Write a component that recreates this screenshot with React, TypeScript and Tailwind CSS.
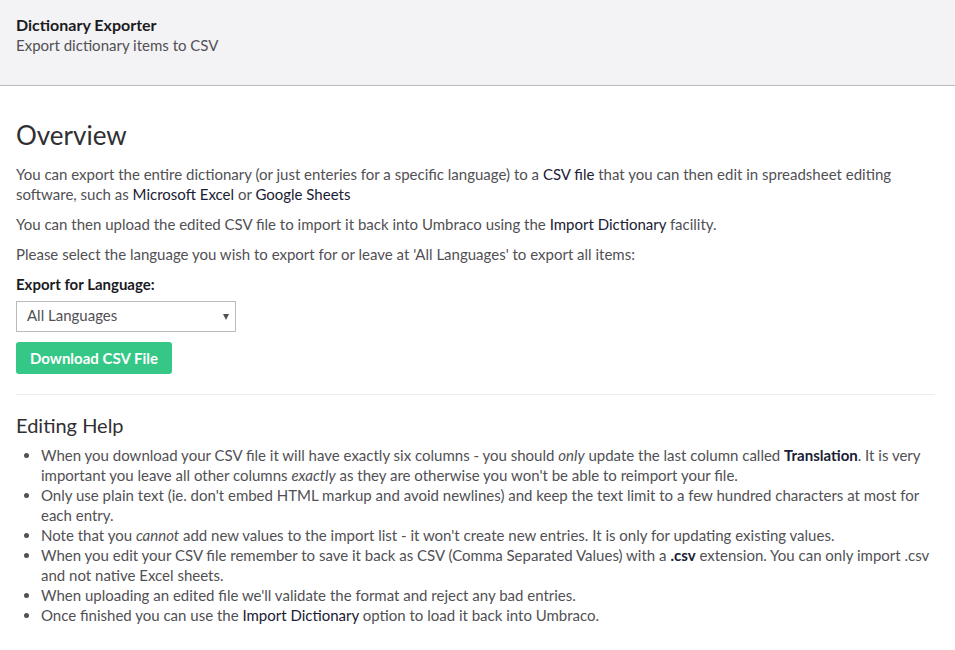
function Link({ children }: { children: React.ReactNode }) {
  return <span className="text-[#1a2033]">{children}</span>;
}

const help: React.ReactNode[] = [
  <>
    When you download your CSV file it will have exactly six columns - you should <em>only</em> update the last
    column called <strong className="text-[#1a2033]">Translation</strong>. It is very important you leave all other
    columns <em>exactly</em> as they are otherwise you won't be able to reimport your file.
  </>,
  <>
    Only use plain text (ie. don't embed HTML markup and avoid newlines) and keep the text limit to a few hundred
    characters at most for each entry.
  </>,
  <>
    Note that you <em>cannot</em> add new values to the import list - it won't create new entries. It is only for
    updating existing values.
  </>,
  <>
    When you edit your CSV file remember to save it back as CSV (Comma Separated Values) with a{" "}
    <strong className="text-[#1a2033]">.csv</strong> extension. You can only import .csv and not native Excel sheets.
  </>,
  <>When uploading an edited file we'll validate the format and reject any bad entries.</>,
  <>
    Once finished you can use the <Link>Import Dictionary</Link> option to load it back into Umbraco.
  </>,
];

function App() {
  return (
    <div className="min-h-screen bg-white font-['Lato','Open_Sans',sans-serif] text-[15px] leading-5 text-[#515054]">
      <header className="h-[86px] border-b border-[#bbbabf] bg-[#f3f3f5] px-4 pt-[15px]">
        <h2 className="text-[16px] font-bold text-[#1b1b1f]">Dictionary Exporter</h2>
        <p>Export dictionary items to CSV</p>
      </header>

      <main className="px-4 pt-[34px]">
        <h1 className="mb-[13px] text-[26px] leading-[31px] text-[#303033]">Overview</h1>
        <p className="mb-[10px]">
          You can export the entire dictionary (or just enteries for a specific language) to a <Link>CSV file</Link>{" "}
          that you can then edit in spreadsheet editing software, such as <Link>Microsoft Excel</Link> or{" "}
          <Link>Google Sheets</Link>
        </p>
        <p className="mb-[10px]">
          You can then upload the edited CSV file to import it back into Umbraco using the{" "}
          <Link>Import Dictionary</Link> facility.
        </p>
        <p className="mb-[10px]">
          Please select the language you wish to export for or leave at 'All Languages' to export all items:
        </p>

        <label className="mb-[7px] block font-bold text-[#1b1b1f]">Export for Language:</label>
        <div className="flex h-[31px] w-[220px] items-center justify-between border border-[#bbbbbb] pb-[3px] pl-[10px] pr-[6px]">
          <span>All Languages</span>
          <svg width="6" height="6" viewBox="0 0 6 6" className="mt-[3px]">
            <path d="M0 0h6L3 6z" fill="#515054" />
          </svg>
        </div>

        <button className="mt-[10px] flex h-8 w-[156px] items-center justify-center rounded-[3px] bg-[#35c786] pb-[1px] font-bold text-white">
          Download CSV File
        </button>

        <hr className="mb-[18px] mr-[4px] mt-[20px] border-[#ececee]" />

        <h2 className="mb-2 text-[20px] leading-6 text-[#303033]">Editing Help</h2>
        <ul className="list-disc pl-[25px]">
          {help.map((item, i) => (
            <li key={i}>{item}</li>
          ))}
        </ul>
      </main>
    </div>
  );
}

export default App;
